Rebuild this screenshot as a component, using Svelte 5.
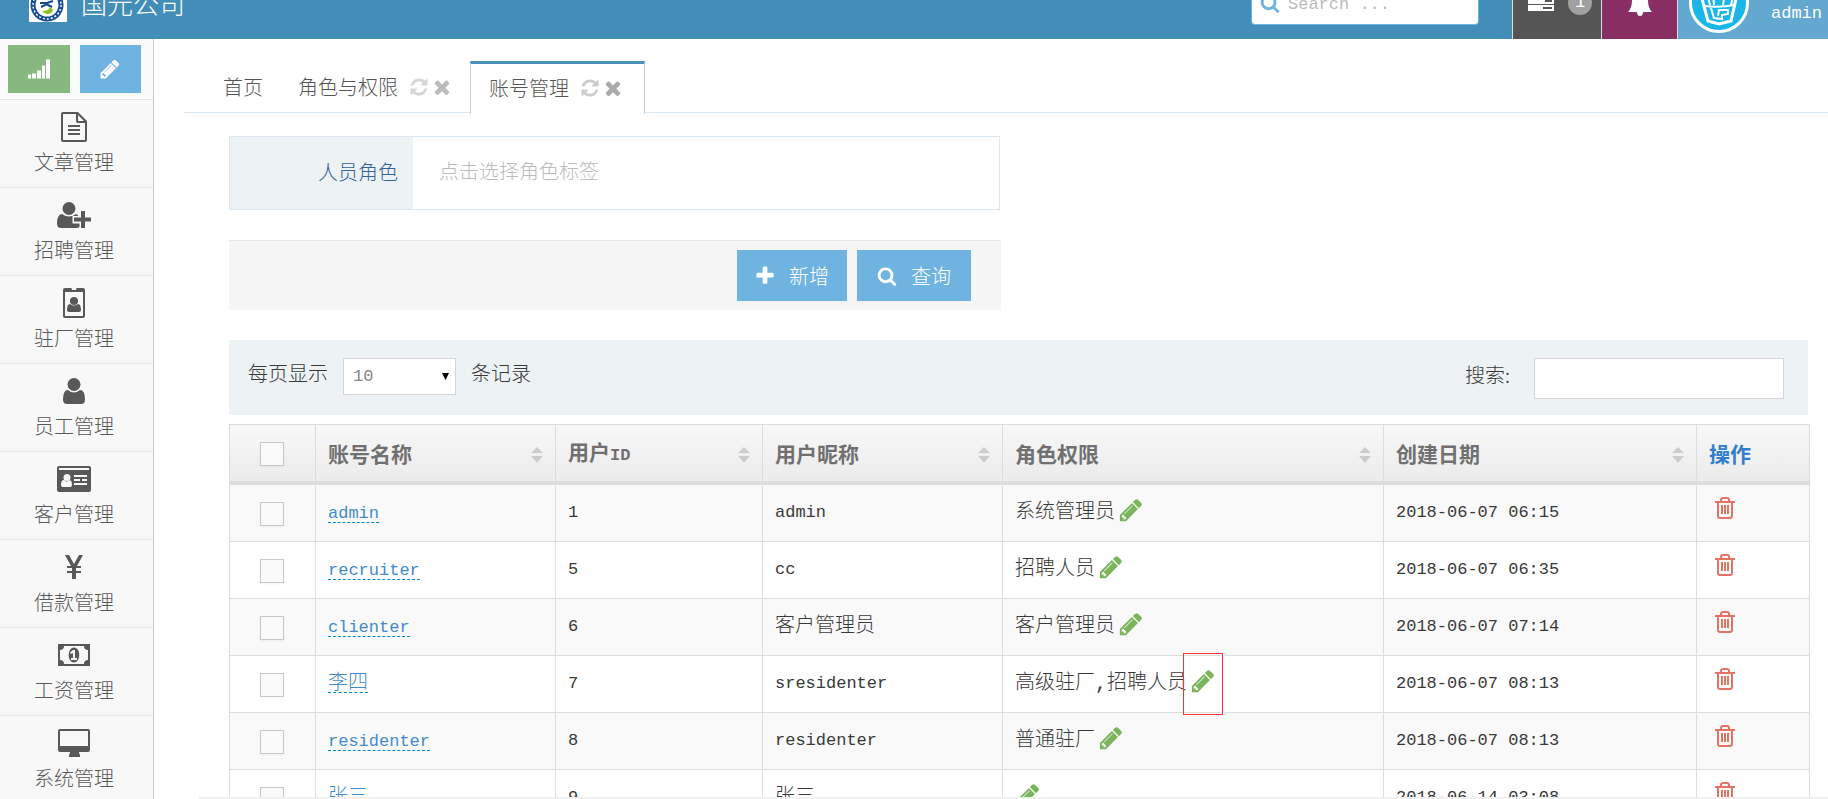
<script lang="ts">
  type Icon = { w: number; h: number; d: string };

  const ICONS: Record<string, Icon> = {
    signal: { w: 22, h: 19, d: 'M0 15h3v4H0zM4 14h4v5H4zM9 11h4v8H9zM14 6h3v13h-3zM18 0h4v19h-4z' },
    pencil: {
      w: 1792, h: 1792,
      d: 'M491 1536l91-91-235-235-91 91v107h128v128h107zm523-928q0-22-22-22-10 0-17 7l-542 542q-7 7-7 17 0 22 22 22 10 0 17-7l542-542q7-7 7-17zm-54-192l416 416-832 832h-416v-416zm683 96q0 53-37 90l-166 166-416-416 166-165q36-38 90-38 53 0 91 38l235 234q37 39 37 91z',
    },
    refresh: {
      w: 1792, h: 1792,
      d: 'M1639 1056q0 5-1 7-64 268-268 434.5t-478 166.5q-146 0-282.5-55t-243.5-157l-129 129q-19 19-45 19t-45-19-19-45v-448q0-26 19-45t45-19h448q26 0 45 19t19 45-19 45l-137 137q71 66 161 102t187 36q134 0 250-65t186-179q11-17 53-117 8-23 30-23h192q13 0 22.5 9.5t9.5 22.5zm25-800v448q0 26-19 45t-45 19h-448q-26 0-45-19t-19-45 19-45l138-138q-148-137-349-137-134 0-250 65t-186 179q-11 17-53 117-8 23-30 23h-199q-13 0-22.5-9.5t-9.5-22.5v-7q65-268 270-434.5t480-166.5q146 0 284 55.5t245 156.5l130-129q19-19 45-19t45 19 19 45z',
    },
    times: {
      w: 1792, h: 1792,
      d: 'M1490 1322q0 40-28 68l-136 136q-28 28-68 28t-68-28l-294-294-294 294q-28 28-68 28t-68-28l-136-136q-28-28-28-68t28-68l294-294-294-294q-28-28-28-68t28-68l136-136q28-28 68-28t68 28l294 294 294-294q28-28 68-28t68 28l136 136q28 28 28 68t-28 68l-294 294 294 294q28 28 28 68z',
    },
    plus: {
      w: 1792, h: 1792,
      d: 'M1600 736v192q0 40-28 68t-68 28h-416v416q0 40-28 68t-68 28h-192q-40 0-68-28t-28-68v-416h-416q-40 0-68-28t-28-68v-192q0-40 28-68t68-28h416v-416q0-40 28-68t68-28h192q40 0 68 28t28 68v416h416q40 0 68 28t28 68z',
    },
    search: {
      w: 1792, h: 1792,
      d: 'M1216 832q0-185-131.5-316.5t-316.5-131.5-316.5 131.5-131.5 316.5 131.5 316.5 316.5 131.5 316.5-131.5 131.5-316.5zm512 832q0 52-38 90t-90 38q-54 0-90-38l-343-342q-179 124-399 124-143 0-273.5-55.5t-225-150-150-225-55.5-273.5 55.5-273.5 150-225 225-150 273.5-55.5 273.5 55.5 225 150 150 225 55.5 273.5q0 220-124 399l343 343q37 37 37 90z',
    },
    tasks: { w: 26, h: 24, d: 'M0 0h26v6H0zM0 7h26v6H0zM0 14h26v6H0zM13 2v1h11V2zM17 9v2h7V9zM15 16v2h9v-2z' },
    bell: { w: 24, h: 26, d: 'M12 0q2 0 2 2 6 1 6 8 0 8 4 12h-9q0 4-3 4t-3-4H0q4-4 4-12 0-7 6-8 0-2 2-2z' },
    file: {
      w: 26, h: 30,
      d: 'M2 0h15l9 9v19q0 2-2 2H2q-2 0-2-2V2q0-2 2-2zM2 2v26h22V11h-7q-2 0-2-2V2zM17 3v6h6zM7 13h12v2H7zM7 17h12v2H7zM7 21h12v2H7z',
    },
    userPlus: {
      w: 34, h: 26,
      d: 'M12 0a6.5 6.5 0 1 1 0 13 6.5 6.5 0 0 1 0-13zM5 12q7 5 14 0 1.500.5 2.500 2h-6v7.500h7v3.500q-1 1-3 1H4q-4 0-4-4.500Q0 12.500 5 12zM24 9h4v6.500h6v4h-6V26h-4v-6.500h-7v-4h7z',
    },
    badge: {
      w: 22, h: 30,
      d: 'M2 0h6q1 0 1 2h4q0-2 1-2h6q2 0 2 2v26q0 2-2 2H2q-2 0-2-2V2q0-2 2-2zM2 4v24h18V4zM11 9a4 4 0 1 1 0 8 4 4 0 0 1 0-8zM7 16q4 3 8 0 3 0 3 6 0 2-2 2H6q-2 0-2-2 0-6 3-6z',
    },
    user: {
      w: 22, h: 26,
      d: 'M11 0a6.500 6.500 0 1 1 0 13 6.500 6.500 0 0 1 0-13zM5 12q6 5 12 0 5 0 5 9.500 0 4.500-4 4.500H4q-4 0-4-4.500Q0 12 5 12z',
    },
    card: {
      w: 34, h: 26,
      d: 'M2 0h30q2 0 2 2v22q0 2-2 2H2q-2 0-2-2V2q0-2 2-2zM2 2v2h30V2zM10 8a3.500 3.500 0 1 0 0 7 3.500 3.500 0 0 0 0-7zM7 14q-3 0-3 5 0 2 2 2h7q2 0 2-2 0-5-3-5-2 3-5 0zM17 9v2h13V9zM17 13v2h6v-2zM25 13v2h5v-2zM17 17v2h13v-2z',
    },
    yen: { w: 18, h: 24, d: 'M0 0h4l5 9 5-9h4l-6 11h4v2h-5v3h5v2h-5v6H7v-6H2v-2h5v-3H2v-2h4z' },
    money: {
      w: 32, h: 22,
      d: 'M0 0h32v22H0zM6 2q0 4-4 4v10q4 0 4 4h20q0-4 4-4V6q-4 0-4-4zM16 3.500c7 0 7 15 0 15s-7-15 0-15zM15 6l-3 2.500 1 1.500 2-1v5h-2v2h6v-2h-2V6z',
    },
    desktop: {
      w: 32, h: 28,
      d: 'M2 0h28q2 0 2 2v19q0 2-2 2h-9q0 2 1 3v2H11v-2q1-1 1-3H2q-2 0-2-2V2q0-2 2-2zM2 2v15h28V2z',
    },
  };

  const menu = [
    { icon: 'file', label: '文章管理' },
    { icon: 'userPlus', label: '招聘管理' },
    { icon: 'badge', label: '驻厂管理' },
    { icon: 'user', label: '员工管理' },
    { icon: 'card', label: '客户管理' },
    { icon: 'yen', label: '借款管理' },
    { icon: 'money', label: '工资管理' },
    { icon: 'desktop', label: '系统管理' },
  ];

  const tabs = [
    { label: '首页', closable: false },
    { label: '角色与权限', closable: true },
    { label: '账号管理', closable: true },
  ];

  const columns = ['账号名称', '用户ID', '用户昵称', '角色权限', '创建日期'];

  const accounts = [
    { name: 'admin', id: 1, nick: 'admin', roles: '系统管理员', created: '2018-06-07 06:15' },
    { name: 'recruiter', id: 5, nick: 'cc', roles: '招聘人员', created: '2018-06-07 06:35' },
    { name: 'clienter', id: 6, nick: '客户管理员', roles: '客户管理员', created: '2018-06-07 07:14' },
    { name: '李四', id: 7, nick: 'sresidenter', roles: '高级驻厂,招聘人员', created: '2018-06-07 08:13' },
    { name: 'residenter', id: 8, nick: 'residenter', roles: '普通驻厂', created: '2018-06-07 08:13' },
    { name: '张三', id: 9, nick: '张三', roles: '', created: '2018-06-14 03:08' },
  ];

  let activeTab = $state('账号管理');
  let pageSize = $state('10');
  let markedId = $state(7);

  // Latin glyphs run wider than half a CJK glyph, so they are set smaller
  function isLatin(s: string): boolean {
    return /^[\x20-\x7e]+$/.test(s);
  }
</script>

{#snippet icon(name: string, cls: string = '')}
  <svg class="icon {cls}" viewBox="0 0 {ICONS[name].w} {ICONS[name].h}" aria-hidden="true">
    <path fill-rule="evenodd" d={ICONS[name].d} />
  </svg>
{/snippet}

<div class="shell">
  <header>
    <div class="navbar">
      <svg class="logo" viewBox="0 0 38 38" aria-hidden="true">
        <rect width="38" height="38" fill="#fff" />
        <circle cx="18" cy="21" r="16.500" fill="#154a94" />
        <circle cx="18" cy="21" r="14" fill="none" stroke="#fff" stroke-width="1.500" stroke-dasharray="2 2" />
        <circle cx="18" cy="21" r="11.500" fill="#fff" />
        <path d="M11 19h7l6-2M20 18q-3 3-8 5M17 20l6 3" fill="none" stroke="#154a94" stroke-width="2" />
        <path d="M13 27q7 0 8-4 5 3 1 6-5 3-9-2z" fill="#8cc21f" />
      </svg>
      <span class="brand">国元公司</span>
      <label class="nav-search">
        {@render icon('search', 'i20')}
        <input class="latin" type="text" placeholder="Search ..." aria-label="Search" />
      </label>
      <button class="nav-item latin grey" aria-label="任务">
        {@render icon('tasks', 'i26')}
        <span class="count">1</span>
      </button>
      <button class="nav-item purple" aria-label="通知">{@render icon('bell', 'i24')}</button>
      <button class="nav-item latin user">
        <svg class="avatar" viewBox="0 0 60 60" aria-hidden="true">
          <circle cx="30" cy="30" r="28.500" fill="#1bb6e8" stroke="#fff" stroke-width="3" />
          <g fill="none" stroke="#fff" stroke-width="2">
            <path d="M13 26l6 22 11 3 12-3 5-22" stroke-width="3" />
            <path d="M15 33q15 2 31-1M18 20l3 12M24 20l1 12M36 20l-2 12M45 20l-3 12M14 26h31M22 35l3 10 8 1v-4l6-1v-4h-9l-1 6" />
          </g>
        </svg>
        <span>admin</span>
      </button>
    </div>
  </header>

  <div class="body">
    <aside>
      <div class="shortcuts">
        <button class="green" aria-label="统计">{@render icon('signal', 'i22')}</button>
        <button class="blue" aria-label="编辑">{@render icon('pencil', 'i22')}</button>
      </div>
      <nav>
        {#each menu as item}
          <a href="#{item.icon}">
            <span class="menu-icon">
              <svg width={ICONS[item.icon].w} height={ICONS[item.icon].h} aria-hidden="true">
                <path fill-rule="evenodd" d={ICONS[item.icon].d} />
              </svg>
            </span>
            {item.label}
          </a>
        {/each}
      </nav>
    </aside>

    <main>
      <div class="tabs">
        {#each tabs as tab}
          <div class="tab" class:active={tab.label === activeTab}>
            <button class="tab-label" onclick={() => (activeTab = tab.label)}>{tab.label}</button>
            {#if tab.closable}
              <button class="tab-tool light" aria-label="刷新">{@render icon('refresh', 'i20')}</button>
              <button class="tab-tool" aria-label="关闭">{@render icon('times', 'i22')}</button>
            {/if}
          </div>
        {/each}
      </div>

      <div class="content">
        <div class="role-field">
          <label for="roles">人员角色</label>
          <input id="roles" type="text" placeholder="点击选择角色标签" />
        </div>

        <div class="actions">
          <button>{@render icon('plus', 'i22')}新增</button>
          <button>{@render icon('search', 'i20')}查询</button>
        </div>

        <div class="filter">
          <label class="length">
            每页显示
            <select class="latin" bind:value={pageSize}>
              <option>10</option>
              <option>25</option>
              <option>50</option>
            </select>
            条记录
          </label>
          <label class="lookup">搜索: <input type="text" /></label>
        </div>

        <table>
          <colgroup>
            <col class="c-check" />
            <col class="c-name" />
            <col class="c-id" />
            <col class="c-name" />
            <col />
            <col class="c-date" />
            <col class="c-op" />
          </colgroup>
          <thead>
            <tr>
              <th class="check"><input type="checkbox" aria-label="全选" /></th>
              {#each columns as column}
                <th>
                  <div class="sortable">
                    <span>{#if column === '用户ID'}用户<span class="latin">ID</span>{:else}{column}{/if}</span>
                    <svg width="12" height="16" aria-hidden="true">
                      <path d="M6 0l6 6H0zM0 9h12l-6 7z" fill="#ccc" />
                    </svg>
                  </div>
                </th>
              {/each}
              <th class="op">操作</th>
            </tr>
          </thead>
          <tbody>
            {#each accounts as account}
              <tr>
                <td class="check"><input type="checkbox" aria-label={account.name} /></td>
                <td><a class="name" class:latin={isLatin(account.name)} href="#{account.id}">{account.name}</a></td>
                <td class="latin">{account.id}</td>
                <td class:latin={isLatin(account.nick)}>{account.nick}</td>
                <td>
                  <div class="roles">
                    {account.roles}
                    <button class="edit" class:marked={account.id === markedId} aria-label="编辑角色">
                      {@render icon('pencil', 'i26')}
                    </button>
                  </div>
                </td>
                <td class="latin">{account.created}</td>
                <td>
                  <button class="trash" aria-label="删除">
                    <svg width="20" height="22" fill="none" stroke="#e47365" stroke-width="2" aria-hidden="true">
                      <path d="M0 5h20M6 5V3q0-2 2-2h4q2 0 2 2v2M3 5v14q0 2 2 2h10q2 0 2-2V5M7 8v9M10 8v9M13 8v9" />
                    </svg>
                  </button>
                </td>
              </tr>
            {/each}
          </tbody>
        </table>
      </div>
      <div class="scrollbar"></div>
    </main>
  </div>
</div>

<style>
  :global(body) { margin: 0; background: #fff; }
  .shell {
    display: flex;
    flex-direction: column;
    height: 100vh;
    overflow: hidden;
    color: #393939;
    font: 300 20px/24px 'Noto Sans CJK SC', sans-serif;
  }
  button, input, select { font: inherit; color: inherit; box-sizing: border-box; }
  button { padding: 0; border: 0; background: none; cursor: pointer; }
  tbody { font-family: 'Liberation Mono', 'Noto Sans CJK SC', monospace; }
  .latin { font-family: 'Liberation Mono', monospace; font-size: 17px; }
  .icon { display: block; flex: none; fill: currentColor; }
  .i20 { width: 20px; height: 20px; }
  .i22 { width: 22px; height: 22px; }
  .i24 { width: 24px; height: 26px; }
  .i26 { width: 26px; height: 26px; }

  /* the navbar is taller than its strip and shows its lower part */
  header { display: flex; align-items: flex-end; flex: none; height: 39px; overflow: hidden; background: #438eb9; color: #fff; }
  .navbar { display: flex; align-items: center; flex: 1; height: 72px; }
  .logo { width: 38px; height: 38px; margin-left: 29px; }
  .brand { flex: 1; margin-left: 14px; font-size: 26px; line-height: 32px; }
  .nav-search {
    display: flex;
    align-items: center;
    box-sizing: border-box;
    width: 228px;
    height: 44px;
    margin-right: 33px;
    padding-left: 8px;
    gap: 8px;
    border: 1px solid #6fb3e0;
    border-radius: 4px;
    background: #fff;
    color: #6fb3e0;
  }
  .nav-search input { flex: 1; min-width: 0; padding: 4px 0 0; border: 0; background: none; }
  input::placeholder { color: #bbb; opacity: 1; }
  .nav-item { display: flex; align-items: center; justify-content: center; box-sizing: border-box; height: 72px; border-left: 1px solid #ddd; }
  .grey { justify-content: flex-start; width: 89px; padding-left: 15px; gap: 14px; background: #555; }
  .purple { width: 76px; background: #892e65; }
  .user { justify-content: flex-start; width: 151px; padding-left: 11px; gap: 22px; background: #62a8d1; }
  .user span { padding-top: 22px; }
  .avatar { width: 60px; height: 60px; }
  .count { width: 24px; border-radius: 12px; background: #a0a0a0; }

  .body { display: flex; flex: 1; min-height: 0; }
  aside { flex: none; width: 153px; border-right: 1px solid #ccc; background: #f8f8f8; overflow: hidden; }
  .shortcuts { display: flex; gap: 10px; padding: 6px 12px 6px 8px; background: #fafafa; }
  .shortcuts button { display: flex; flex: 1; align-items: center; justify-content: center; height: 48px; color: #fff; }
  .green { background: #87b87f; }
  .blue { background: #6fb3e0; }
  nav a {
    display: flex;
    flex-direction: column;
    align-items: center;
    box-sizing: border-box;
    height: 88px;
    padding: 10px 5px 0 0;
    border-top: 1px solid #e5e5e5;
    color: #585858;
    text-decoration: none;
  }
  .menu-icon { display: flex; align-items: center; height: 34px; margin-bottom: 6px; fill: #585858; }

  main { display: flex; flex-direction: column; flex: 1; min-width: 0; padding-left: 30px; }
  .tabs { display: flex; flex: none; height: 51px; margin-top: 22px; padding-left: 21px; border-bottom: 1px solid #dce8f1; color: #555; }
  .tab { display: flex; align-items: center; padding: 1px 17px 0 18px; }
  .tab.active { height: 48px; padding: 0 20px 2px 18px; border: 1px solid #c5d0dc; border-top: 3px solid #4c8fbd; border-bottom: 0; background: #fff; }
  .tab-tool { margin-left: 2px; color: #bbb; }
  .tab-tool.light { margin-left: 11px; color: #d5d5d5; }
  .active .tab-tool { color: #aaa; }
  .active .tab-tool.light { color: #ccc; }

  .content { flex: 1; min-height: 0; padding: 23px 18px 0 45px; overflow: hidden; }
  .role-field { display: flex; box-sizing: border-box; max-width: 771px; height: 74px; border: 1px solid #dce8f1; }
  .role-field label { box-sizing: border-box; width: 183px; padding: 23px 15px 0 0; background: #edf2f5; color: #336199; text-align: right; }
  .role-field input { flex: 1; min-width: 0; padding: 0 26px 4px; border: 0; }
  .actions {
    display: flex;
    justify-content: flex-end;
    gap: 10px;
    box-sizing: border-box;
    max-width: 772px;
    height: 70px;
    margin-top: 30px;
    padding: 9px 30px;
    border-top: 1px solid #e5e5e5;
    background: #f5f5f5;
  }
  .actions button { display: flex; align-items: center; gap: 13px; padding: 0 18px 0 17px; background: #6fb3e0; color: #fff; }
  .actions button:last-child { gap: 14px; padding: 0 20px; }

  .filter { display: flex; justify-content: space-between; box-sizing: border-box; height: 75px; margin: 30px 2px 9px 0; padding: 18px 24px 0 19px; background: #edf2f5; }
  .filter label { display: flex; align-items: flex-start; }
  .length { gap: 15px; line-height: 30px; }
  .lookup { gap: 24px; line-height: 34px; }
  select {
    width: 113px;
    height: 37px;
    padding: 0 9px;
    border: 1px solid #d5d5d5;
    border-radius: 0;
    appearance: none;
    background: #fff url("data:image/svg+xml,%3Csvg xmlns='http://www.w3.org/2000/svg' width='7' height='7'%3E%3Cpath d='M0 0h7L3.5 7z'/%3E%3C/svg%3E") no-repeat right 6px center;
    color: #858585;
  }
  .lookup input { width: 250px; height: 41px; border: 1px solid #d5d5d5; }

  table { width: 100%; table-layout: fixed; border-collapse: separate; border-spacing: 0; border: solid #ddd; border-width: 1px 0 0 1px; }
  .c-check { width: 86px; }
  .c-name { width: 240px; }
  .c-id { width: 207px; }
  .c-date { width: 313px; }
  .c-op { width: 113px; }
  th, td { box-sizing: border-box; height: 57px; padding: 0 12px; border: solid #ddd; border-width: 0 1px 1px 0; text-align: left; white-space: nowrap; }
  th { height: 60px; border-bottom-width: 4px; background: linear-gradient(#f8f8f8, #ebebeb); color: #707070; font-size: 21px; }
  th.op { color: #307ecc; }
  tbody tr:nth-child(odd) { background: #f9f9f9; }
  .check { padding: 2px 2px 0 0; text-align: center; }
  input[type='checkbox'] {
    display: block;
    width: 24px;
    height: 24px;
    margin: 0 auto;
    border: 1px solid #c8c8c8;
    appearance: none;
    background: #fafafa;
    box-shadow: 0 1px 2px rgba(0, 0, 0, 0.05);
  }
  .sortable { display: flex; align-items: center; justify-content: space-between; }
  .sortable svg { margin-top: 4px; }
  .name { display: inline-block; border-bottom: 1px dashed #08c; color: #428bca; line-height: 17px; text-decoration: none; }
  .roles { display: flex; align-items: center; gap: 3px; }
  .edit { position: relative; padding-bottom: 6px; color: #7ab55c; }
  .marked::after { content: ''; position: absolute; inset: -15px -7px; border: 1px solid #f33; }
  .trash { display: block; margin: 0 0 4px 6px; }

  .scrollbar { flex: none; height: 2px; margin-left: 15px; background: #f1f1f1; }
</style>
